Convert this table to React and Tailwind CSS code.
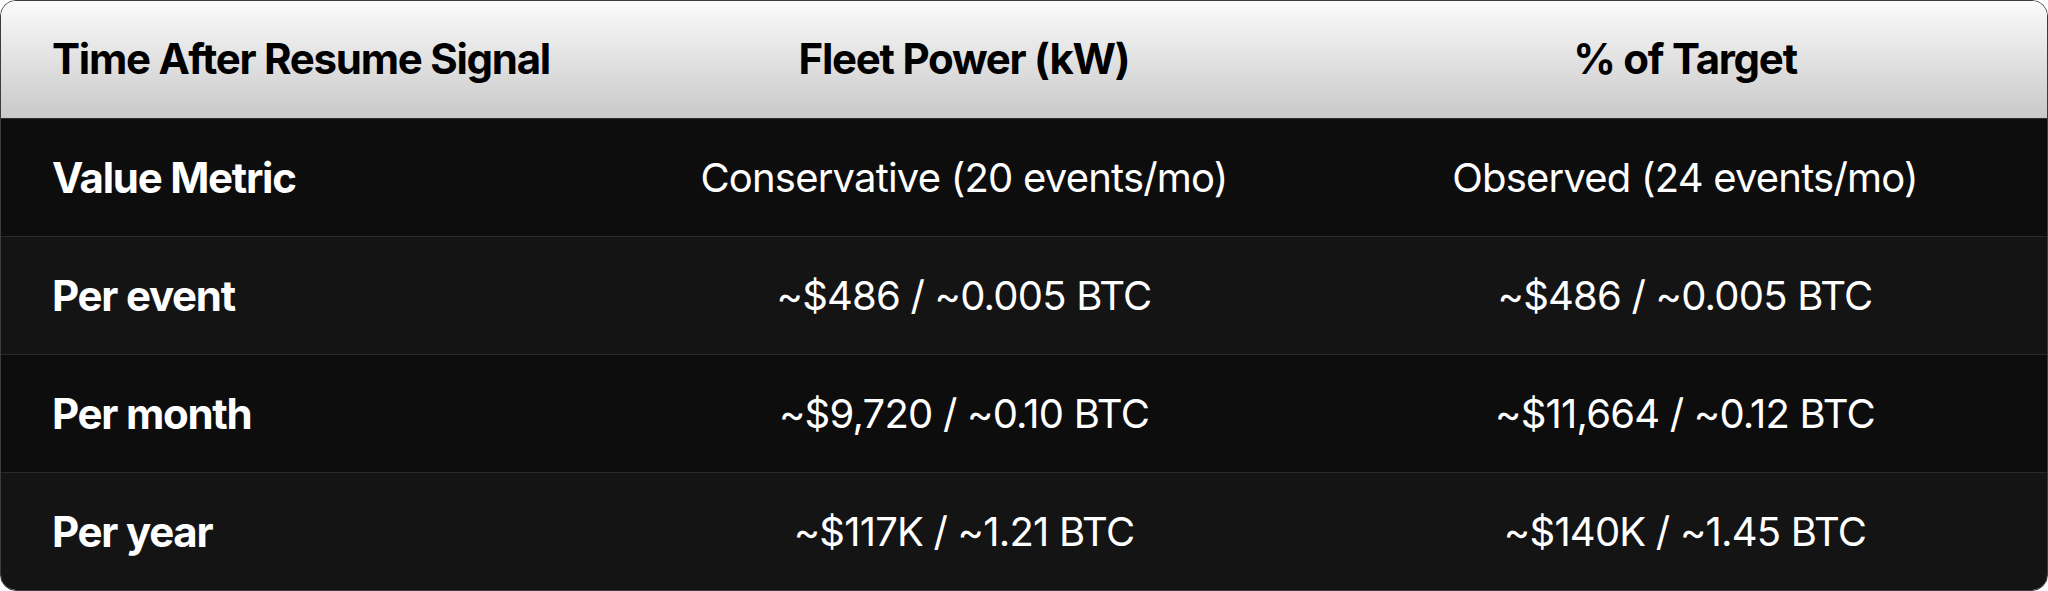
const rows = [
  ["Value Metric", "Conservative (20 events/mo)", "Observed (24 events/mo)"],
  ["Per event", "~$486 / ~0.005 BTC", "~$486 / ~0.005 BTC"],
  ["Per month", "~$9,720 / ~0.10 BTC", "~$11,664 / ~0.12 BTC"],
  ["Per year", "~$117K / ~1.21 BTC", "~$140K / ~1.45 BTC"],
];

export default function App() {
  return (
    <div className="min-h-screen w-full bg-white font-['Inter',sans-serif]">
      <div className="w-[2048px] overflow-hidden rounded-2xl border border-[#3c3c3c]">
        {/* header */}
        <div className="grid h-[118px] grid-cols-[604px_718px_1fr] items-center border-b border-[#2e2e2e] bg-gradient-to-b from-[#fbfbfb] to-[#c9c9c9] text-[42px] font-bold tracking-[-0.03em] text-black">
          <div className="pb-[2px] pl-[51px]">Time After Resume Signal</div>
          <div className="pb-[2px] text-center">Fleet Power (kW)</div>
          <div className="pb-[2px] text-center">% of Target</div>
        </div>
        {rows.map((r, i) => (
          <div
            key={i}
            className={
              i % 2 === 0
                ? "grid h-[118px] grid-cols-[604px_718px_1fr] items-center border-b border-[#2a2a2a] bg-[#0d0d0d] text-white"
                : "grid h-[118px] grid-cols-[604px_718px_1fr] items-center border-b border-[#2a2a2a] bg-[#141414] text-white last:h-[117px] last:border-b-0"
            }
          >
            <div className="pl-[51px] text-[42px] font-bold tracking-[-0.03em]">{r[0]}</div>
            <div className="text-center text-[40px] tracking-[-0.02em]">{r[1]}</div>
            <div className="text-center text-[40px] tracking-[-0.02em]">{r[2]}</div>
          </div>
        ))}
      </div>
    </div>
  );
}
